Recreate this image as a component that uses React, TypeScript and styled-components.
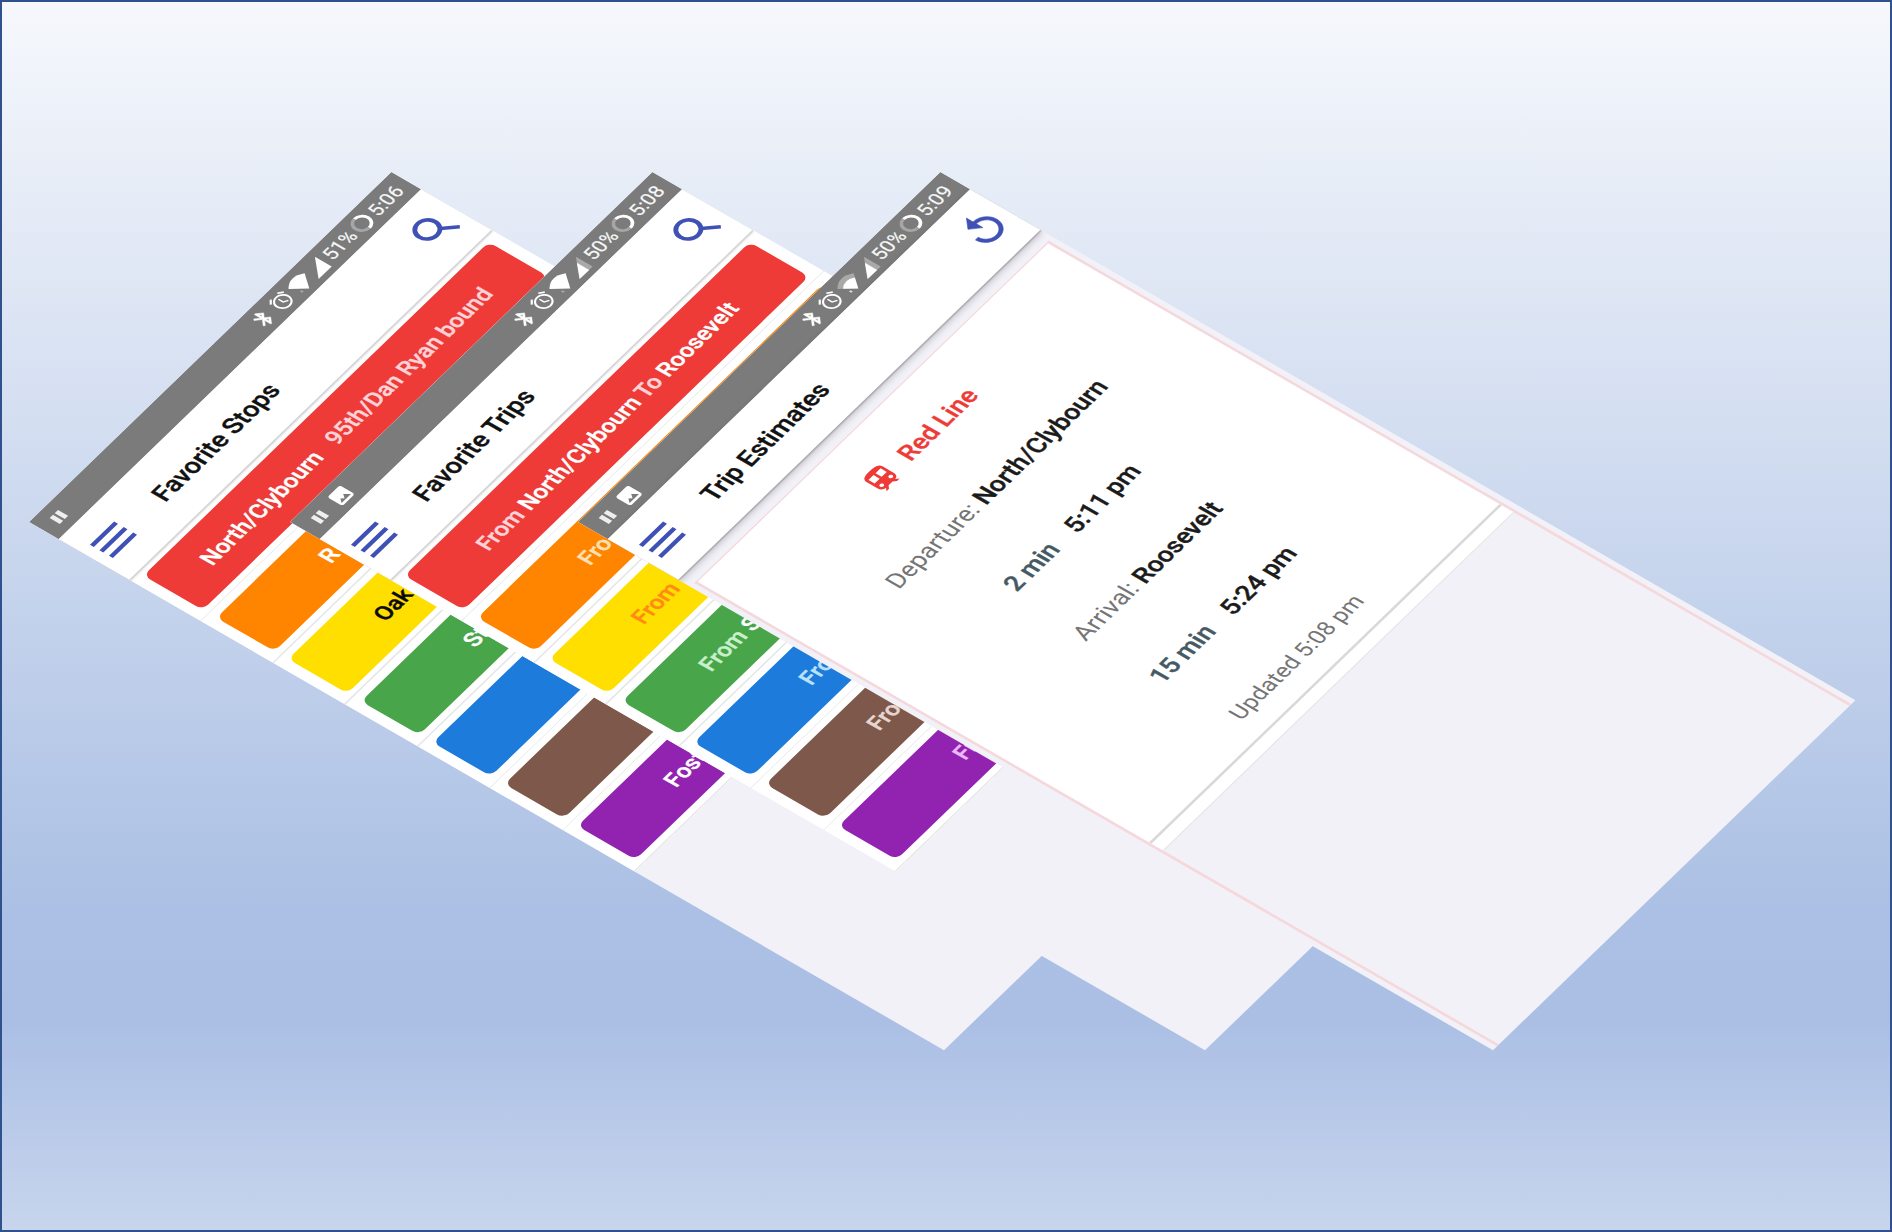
import React from "react";
import styled, { createGlobalStyle } from "styled-components";

const GlobalStyle = createGlobalStyle`
  *, *::before, *::after { box-sizing: border-box; }
  html, body { margin: 0; padding: 0; }
  body { font-family: Roboto, "Noto Sans", sans-serif; overflow: hidden; }
`;

const Stage = styled.main`
  position: relative;
  width: 1892px;
  height: 1232px;
  overflow: hidden;
  border: 2px solid #2f528f;
  background: linear-gradient(180deg, #f6f8fc 0%, #abc0e4 74%, #abbfe5 83%, #c7d5ed 100%);
`;

/* Each phone is a 360 x 740 sheet laid down in an isometric projection. */
const Phone = styled.section<{ $x: number }>`
  position: absolute;
  left: ${(p) => p.$x - 2}px;
  top: 520.3px;
  width: 360px;
  height: 740px;
  display: flex;
  flex-direction: column;
  overflow: hidden;
  background: #f3f1f8;
  transform-origin: 0 0;
  transform: matrix(1.00667, -0.9722, 1.2365, 0.7138, 0, 0);
`;

const StatusBar = styled.div`
  flex: none;
  height: 24px;
  display: flex;
  align-items: center;
  padding: 0 7.5px 0 8px;
  background: #7b7b7b;
  color: #f8f8f8;
  font-size: 13.8px;
  line-height: 24.6px;
  -webkit-text-stroke: 0.15px currentColor;
`;

const Notices = styled.div`
  display: flex;
  align-items: center;
  gap: 8px;
  margin-right: auto;
`;

const Glyph = styled.svg<{ $w: number; $ml?: number }>`
  display: block;
  flex: none;
  width: ${(p) => p.$w}px;
  height: ${(p) => p.$w}px;
  margin-left: ${(p) => p.$ml ?? 0}px;
`;

const StatusText = styled.span<{ $ml: number; $w: number }>`
  margin-left: ${(p) => p.$ml}px;
  width: ${(p) => p.$w}px;
  white-space: nowrap;
`;

const Header = styled.header<{ $raised?: boolean }>`
  flex: none;
  position: relative;
  z-index: 1;
  height: 57px;
  display: flex;
  align-items: center;
  justify-content: space-between;
  padding: 0 4.5px 0.4px 3.5px;
  background: #fff;
  box-shadow: ${(p) =>
    p.$raised
      ? "0 1px 1px rgba(0,0,0,.2), 0 2px 5px rgba(0,0,0,.2)"
      : "0 1.2px 1px rgba(0,0,0,.12), 0 1.6px 2px rgba(0,0,0,.08)"};
`;

const Title = styled.h1`
  flex: 1;
  margin: 0 0 0 27.5px;
  padding-top: 1px;
  font-size: 18px;
  font-weight: 500;
  line-height: 56px;
  color: #111;
  white-space: nowrap;
  -webkit-text-stroke: 0.3px currentColor;
`;

const List = styled.ul`
  flex: none;
  list-style: none;
  margin: 0;
  padding: 0;
`;

const Row = styled.li<{ $line: number }>`
  height: 58.44px;
  padding: 5.2px 9.5px 0 7.8px;
  background: #fff;
  box-shadow: inset 0 ${(p) => -p.$line}px 0 #e6e7e8;
`;

const Card = styled.div<{ $bg: string; $pad: number }>`
  height: 47.5px;
  padding-left: ${(p) => p.$pad - 7.8}px;
  border-radius: 5.5px;
  background: ${(p) => p.$bg};
  color: #fff;
  font-size: 16.15px;
  font-weight: 500;
  line-height: 49.4px;
  white-space: pre;
  overflow: hidden;
  -webkit-text-stroke: 0.3px currentColor;
`;

const Tint = styled.span<{ $c: string }>`
  color: ${(p) => p.$c};
`;

const Trip = styled.div`
  flex: 1;
  margin: 10.2px 3.8px 0;
  border: 2px solid #f5d8dc;
  border-top-width: 1px;
  border-bottom: 0;
  display: flex;
  flex-direction: column;
`;

const Details = styled.div`
  flex: none;
  height: 366.4px;
  padding-top: 8.4px;
  background: #fff;
  border-bottom: 2px solid #d9d9d9;
`;

const Footer = styled.div`
  flex: none;
  height: 10.5px;
  background: #fff;
  border-bottom: 1px solid #e6e6ea;
`;

const Line = styled.p<{ $size?: number; $gap?: number; $h?: number }>`
  display: flex;
  justify-content: center;
  align-items: center;
  gap: ${(p) => p.$gap ?? 4.5}px;
  margin: 0;
  height: ${(p) => p.$h ?? 61}px;
  font-size: ${(p) => p.$size ?? 17.7}px;
  color: #757575;
  white-space: nowrap;
`;

const Strong = styled.b<{ $c?: string }>`
  font-weight: 500;
  color: ${(p) => p.$c ?? "#1b1b1b"};
  -webkit-text-stroke: 0.3px currentColor;
`;

const Pause = () => (
  <Glyph $w={13} viewBox="0 0 13 13" fill="#eee">
    <path d="M2.200 2.400h3.300v8.200H2.200zM7.200 2.400h3.300v8.200H7.200z" />
  </Glyph>
);

const Picture = () => (
  <Glyph $w={14} viewBox="0 0 24 24" fill="#fff">
    <path d="M22.500 19.500V4.500c0-1.650-1.350-3-3-3H4.500c-1.650 0-3 1.350-3 3v15c0 1.650 1.350 3 3 3h15c1.650 0 3-1.350 3-3zM8.300 14l2.900 3.500L15 12.500l5 6.700H4z" />
  </Glyph>
);

const Bluetooth = () => (
  <Glyph $w={16} viewBox="0 0 24 24" fill="#fff" stroke="#fff" strokeWidth=".5">
    <path d="M17.710 7.710 12 2h-1v7.590L6.410 5 5 6.410 10.590 12 5 17.590 6.410 19 11 14.410V22h1l5.710-5.710-4.300-4.290 4.300-4.290zM13 5.830l1.880 1.880L13 9.590V5.830zm1.880 10.460L13 18.170v-3.760l1.880 1.880z" />
  </Glyph>
);

const Alarm = () => (
  <Glyph $w={16.5} $ml={1.5} viewBox="0 0 24 24" fill="#fff">
    <path d="M22 5.720l-4.600-3.860-1.290 1.530 4.600 3.860L22 5.720zM7.880 3.390L6.600 1.860 2 5.710l1.290 1.530 4.590-3.850zM12.500 8H11v6l4.750 2.850.75-1.230-4-2.370V8zM12 4c-4.970 0-9 4.030-9 9s4.020 9 9 9 9-4.030 9-9-4.030-9-9-9zm0 16c-3.870 0-7-3.130-7-7s3.130-7 7-7 7 3.130 7 7-3.130 7-7 7z" />
  </Glyph>
);

const Wifi = ({ weak }: { weak?: boolean }) => (
  <Glyph $w={17} $ml={2} viewBox="0 0 17 17">
    <path d="M8.500 15.500.500 5.200Q8.500-1.500 16.500 5.200Z" fill={weak ? "#a9a9a9" : "#fff"} />
    {weak && <path d="M8.500 15.500 2.700 8Q8.500 3.200 14.300 8Z" fill="#fff" />}
    <path d="M3.200 12.500l1.200 1.600M4.400 12.500l-1.200 1.600" stroke={weak ? "#ddd" : "#aaa"} strokeWidth=".8" />
  </Glyph>
);

const Signal = ({ partial }: { partial?: boolean }) => (
  <Glyph $w={15} $ml={0.5} viewBox="0 0 15 15">
    <path d="M13 .700V14.300H0Z" fill={partial ? "#a9a9a9" : "#fff"} />
    {partial && <path d="M9.500 4.300V14.300H0Z" fill="#fff" />}
  </Glyph>
);

const Battery = () => (
  <Glyph $w={16} $ml={0.2} viewBox="0 0 16 16" fill="none" strokeWidth="2.200">
    <circle cx="8" cy="8" r="6" stroke="#a6a6a6" />
    <path d="M8 2a6 6 0 0 1 0 12" stroke="#fff" />
  </Glyph>
);

const Menu = () => (
  <Glyph $w={32} viewBox="0 0 32 32" fill="#3f51b5">
    <path d="M4 6.800h24v3.100H4zM4 14.500h24v3.100H4zM4 22.200h24v3.100H4z" />
  </Glyph>
);

const Search = () => (
  <Glyph $w={32} viewBox="0 0 32 32" fill="none" stroke="#3f51b5" strokeWidth="3">
    <circle cx="12.400" cy="12.300" r="7.900" />
    <path d="M17.800 18.300l8.400 9" />
  </Glyph>
);

const Replay = () => (
  <Glyph $w={32} viewBox="0 0 24 24" fill="#3f51b5" stroke="#3f51b5" strokeWidth=".300">
    <path d="M12 5V1L7 6l5 5V7c3.310 0 6 2.690 6 6s-2.690 6-6 6-6-2.690-6-6H4c0 4.420 3.580 8 8 8s8-3.580 8-8-3.580-8-8-8z" />
  </Glyph>
);

const Train = () => (
  <Glyph $w={24} viewBox="0 0 24 24" fill="#ee3b37">
    <path d="M12 2c-4.420 0-8 .5-8 4v9.500C4 17.430 5.570 19 7.500 19L5.500 21h2.500l2-2h4l2 2h2.500L16.500 19c1.930 0 3.500-1.570 3.500-3.500V6c0-3.500-3.580-4-8-4zM7.500 17c-.83 0-1.500-.67-1.500-1.500S6.670 14 7.500 14s1.500.67 1.500 1.500S8.330 17 7.500 17zm3.500-6H6V6h5v5zm5.500 6c-.83 0-1.500-.67-1.500-1.500s.67-1.500 1.500-1.500 1.500.67 1.500 1.500-.67 1.500-1.500 1.500zm1.500-6h-5V6h5v5z" />
  </Glyph>
);

type StatusProps = { charge: string; time: string; picture?: boolean; partial?: boolean; weak?: boolean };

const Status = ({ charge, time, picture, partial, weak }: StatusProps) => (
  <StatusBar>
    <Notices>
      <Pause />
      {picture && <Picture />}
    </Notices>
    <Bluetooth />
    <Alarm />
    <Wifi weak={weak} />
    <Signal partial={partial} />
    <StatusText $ml={2.4} $w={26.4}>{charge}</StatusText>
    <Battery />
    <StatusText $ml={2.5} $w={26.5}>{time}</StatusText>
  </StatusBar>
);

type Entry = { bg: string; pad: number; line: number; text: React.ReactNode };

const stops: Entry[] = [
  { bg: "#ee3b37", pad: 39.5, line: 0.6, text: <>North/Clybourn{"   "}<Tint $c="#ffd3d8">95th/Dan Ryan bound</Tint></> },
  { bg: "#ff8400", pad: 85, line: 1.3, text: "R" },
  { bg: "#ffdf00", pad: 68, line: 1.3, text: <Tint $c="#0a0a0a">Oak</Tint> },
  { bg: "#48a54a", pad: 84.5, line: 1.3, text: "St" },
  { bg: "#1c7bdb", pad: 85, line: 0.6, text: "" },
  { bg: "#7e584a", pad: 85, line: 0.6, text: "" },
  { bg: "#9223b0", pad: 69, line: 1, text: "Fost" },
];

const trips: Entry[] = [
  { bg: "#ee3b37", pad: 54.5, line: 0.6, text: <><Tint $c="#ffd3d8">From </Tint>North/Clybourn<Tint $c="#ffd3d8"> To </Tint>Roosevelt</> },
  { bg: "#ff8400", pad: 83, line: 1.3, text: <Tint $c="#ffe0b2">From</Tint> },
  { bg: "#ffdf00", pad: 65, line: 1.3, text: <Tint $c="#ff8a14">From</Tint> },
  { bg: "#48a54a", pad: 59.5, line: 1.3, text: <><Tint $c="#c8f0ca">From </Tint>St</> },
  { bg: "#1c7bdb", pad: 88, line: 0.6, text: <Tint $c="#bbe2fb">From</Tint> },
  { bg: "#7e584a", pad: 84, line: 0.6, text: <Tint $c="#e6d6d0">From</Tint> },
  { bg: "#9223b0", pad: 97, line: 1, text: <Tint $c="#edb8fa">From</Tint> },
];

const Favorites = ({ entries }: { entries: Entry[] }) => (
  <List>
    {entries.map((e) => (
      <Row key={e.bg} $line={e.line}>
        <Card $bg={e.bg} $pad={e.pad}>{e.text}</Card>
      </Row>
    ))}
  </List>
);

export default function App() {
  return (
    <Stage>
      <GlobalStyle />
      <Phone $x={28.6}>
        <Status charge="51%" time="5:06" />
        <Header><Menu /><Title>Favorite Stops</Title><Search /></Header>
        <Favorites entries={stops} />
      </Phone>
      <Phone $x={289.7}>
        <Status charge="50%" time="5:08" picture partial />
        <Header><Menu /><Title>Favorite Trips</Title><Search /></Header>
        <Favorites entries={trips} />
      </Phone>
      <Phone $x={577.6}>
        <Status charge="50%" time="5:09" picture partial weak />
        <Header $raised><Menu /><Title>Trip Estimates</Title><Replay /></Header>
        <Trip>
          <Details>
            <Line $gap={9}><Train /><Strong $c="#ee3b37">Red Line</Strong></Line>
            <Line>Departure: <Strong>North/Clybourn</Strong></Line>
            <Line $gap={16}><Strong $c="#455a64">2 min</Strong><Strong>5:11 pm</Strong></Line>
            <Line>Arrival: <Strong>Roosevelt</Strong></Line>
            <Line $gap={16}><Strong $c="#455a64">15 min</Strong><Strong>5:24 pm</Strong></Line>
            <Line $size={16.2} $h={58}>Updated 5:08 pm</Line>
          </Details>
          <Footer />
        </Trip>
      </Phone>
    </Stage>
  );
}
